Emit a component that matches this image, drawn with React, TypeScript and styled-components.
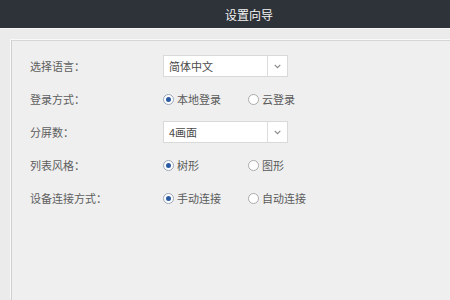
import styled, { createGlobalStyle } from "styled-components";

const GlobalStyle = createGlobalStyle`
    html, body {
        margin: 0;
        padding: 0;
        background: #ebebeb;
    }
    body {
        width: 450px;
        height: 300px;
        overflow: hidden;
        font-family: "Noto Sans CJK SC", "Noto Sans", sans-serif;
    }
`

const Page = styled.div`
    display: flex;
    flex-direction: column;
    width: 450px;
    height: 300px;
    background-color: #ebebeb;
`

const Header = styled.div`
    display: flex;
    align-items: center;
    justify-content: center;
    height: 28px;
    padding-left: 48px;
    background-color: #2e3239;
    border-bottom: 1px solid #f6f6f6;
    color: #f4f4f4;
    font-size: 12px;
    flex-shrink: 0;
`

const Body = styled.div`
    flex: 1;
    display: flex;
    padding: 11px 0 0 11px;
    overflow: hidden;
`

const Panel = styled.div`
    flex: 1;
    display: flex;
    flex-direction: column;
    gap: 11px;
    padding: 14px 0 0 18px;
    margin-right: -20px;
    background-color: #efefef;
    border-top: 1px solid #d6d6d6;
    border-left: 1px solid #cfcfcf;
    box-shadow: -1px -1px 0 #f9f9f9;
`

const Row = styled.div`
    display: flex;
    align-items: center;
    height: 22px;
`

const Label = styled.div`
    width: 133px;
    color: #5e5e5e;
    font-size: 11px;
`

const Select = styled.div`
    display: flex;
    width: 125px;
    height: 22px;
    box-sizing: border-box;
    background-color: #ffffff;
    border: 1px solid #d9d9d9;
`

const SelectValue = styled.div`
    flex: 1;
    display: flex;
    align-items: center;
    padding-left: 5px;
    color: #4a4a4a;
    font-size: 11px;
`

const SelectArrow = styled.div`
    width: 19px;
    display: flex;
    align-items: center;
    justify-content: center;
    border-left: 1px solid #dcdcdc;
`

const RadioGroup = styled.div`
    display: flex;
    align-items: center;
`

const Option = styled.div`
    display: flex;
    align-items: center;
    width: 85px;
    gap: 3px;
    color: #5a5a5a;
    font-size: 11px;
`

const Circle = styled.span<{ $checked: boolean }>`
    width: 11px;
    height: 11px;
    box-sizing: border-box;
    border-radius: 50%;
    border: 1px solid ${p => p.$checked ? "#9aa6b8" : "#ababab"};
    background-color: #ffffff;
    display: flex;
    align-items: center;
    justify-content: center;

    &::after {
        content: "";
        display: ${p => p.$checked ? "block" : "none"};
        width: 5px;
        height: 5px;
        border-radius: 50%;
        background-color: #2a5aa3;
    }
`

const Chevron = () => (
    <svg width="7" height="5" viewBox="0 0 7 5">
        <path d="M0.7 0.8 L3.5 3.6 L6.3 0.8" fill="none" stroke="#888" strokeWidth="1.1" />
    </svg>
)

const Dropdown = ({ value }: { value: string }) => (
    <Select>
        <SelectValue>{value}</SelectValue>
        <SelectArrow><Chevron /></SelectArrow>
    </Select>
)

const Radios = ({ options, checked }: { options: string[], checked: number }) => (
    <RadioGroup>
        {options.map((o, i) => (
            <Option key={o}>
                <Circle $checked={i === checked} />
                <span>{o}</span>
            </Option>
        ))}
    </RadioGroup>
)

export default function App() {
    return (
        <Page>
            <GlobalStyle />
            <Header>设置向导</Header>
            <Body>
                <Panel>
                    <Row>
                        <Label>选择语言：</Label>
                        <Dropdown value="简体中文" />
                    </Row>
                    <Row>
                        <Label>登录方式：</Label>
                        <Radios options={["本地登录", "云登录"]} checked={0} />
                    </Row>
                    <Row>
                        <Label>分屏数：</Label>
                        <Dropdown value="4画面" />
                    </Row>
                    <Row>
                        <Label>列表风格：</Label>
                        <Radios options={["树形", "图形"]} checked={0} />
                    </Row>
                    <Row>
                        <Label>设备连接方式：</Label>
                        <Radios options={["手动连接", "自动连接"]} checked={0} />
                    </Row>
                </Panel>
            </Body>
        </Page>
    )
}
